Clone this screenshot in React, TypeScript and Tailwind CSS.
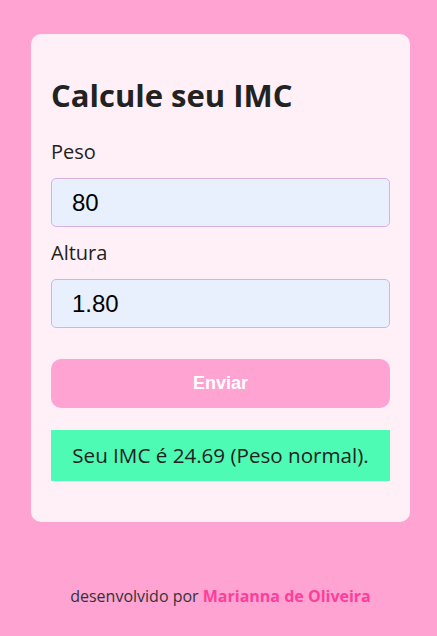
const App = () => {
  return (
    <div className="min-h-screen w-full bg-[#ffa3d3] pt-[34px] font-['Open_Sans',sans-serif] text-[#222]">
      <div className="ml-[31px] w-[379px] rounded-[10px] bg-[#fff0f8] px-5 pt-[39px] pb-[41px]">
        <h1 className="text-[31px] font-bold leading-[44px]">Calcule seu IMC</h1>
        <form className="mt-[21px] flex flex-col" onSubmit={(e) => e.preventDefault()}>
          <label className="text-[20px] leading-[28px]">Peso</label>
          <input
            type="text"
            defaultValue="80"
            className="mt-3 h-[49px] w-full rounded-[5px] border border-[#d8b2df] bg-[#e8f0fe] px-[20px] font-['Liberation_Sans',Arial,sans-serif] text-[24px] text-black outline-none"
          />
          <label className="mt-3 text-[20px] leading-[28px]">Altura</label>
          <input
            type="text"
            defaultValue="1.80"
            className="mt-3 h-[49px] w-full rounded-[5px] border border-[#d8b2df] bg-[#e8f0fe] px-[20px] font-['Liberation_Sans',Arial,sans-serif] text-[24px] text-black outline-none"
          />
          <button
            type="submit"
            className="mt-[31px] h-[49px] w-full rounded-[10px] bg-[#ffa3d3] font-['Liberation_Sans',Arial,sans-serif] text-[18px] font-bold text-white"
          >
            Enviar
          </button>
        </form>
        <div className="mt-[22px] flex h-[51px] items-center justify-center bg-[#4dfbb4] text-[20.6px]">
          Seu IMC é 24.69 (Peso normal).
        </div>
      </div>
      <footer className="mt-[62px] pl-1 text-center text-[16px] leading-[24px] text-[#333]">
        desenvolvido por{" "}
        <a href="#" className="font-bold text-[#ff3d9a]">
          Marianna de Oliveira
        </a>
      </footer>
    </div>
  );
};

export default App;
